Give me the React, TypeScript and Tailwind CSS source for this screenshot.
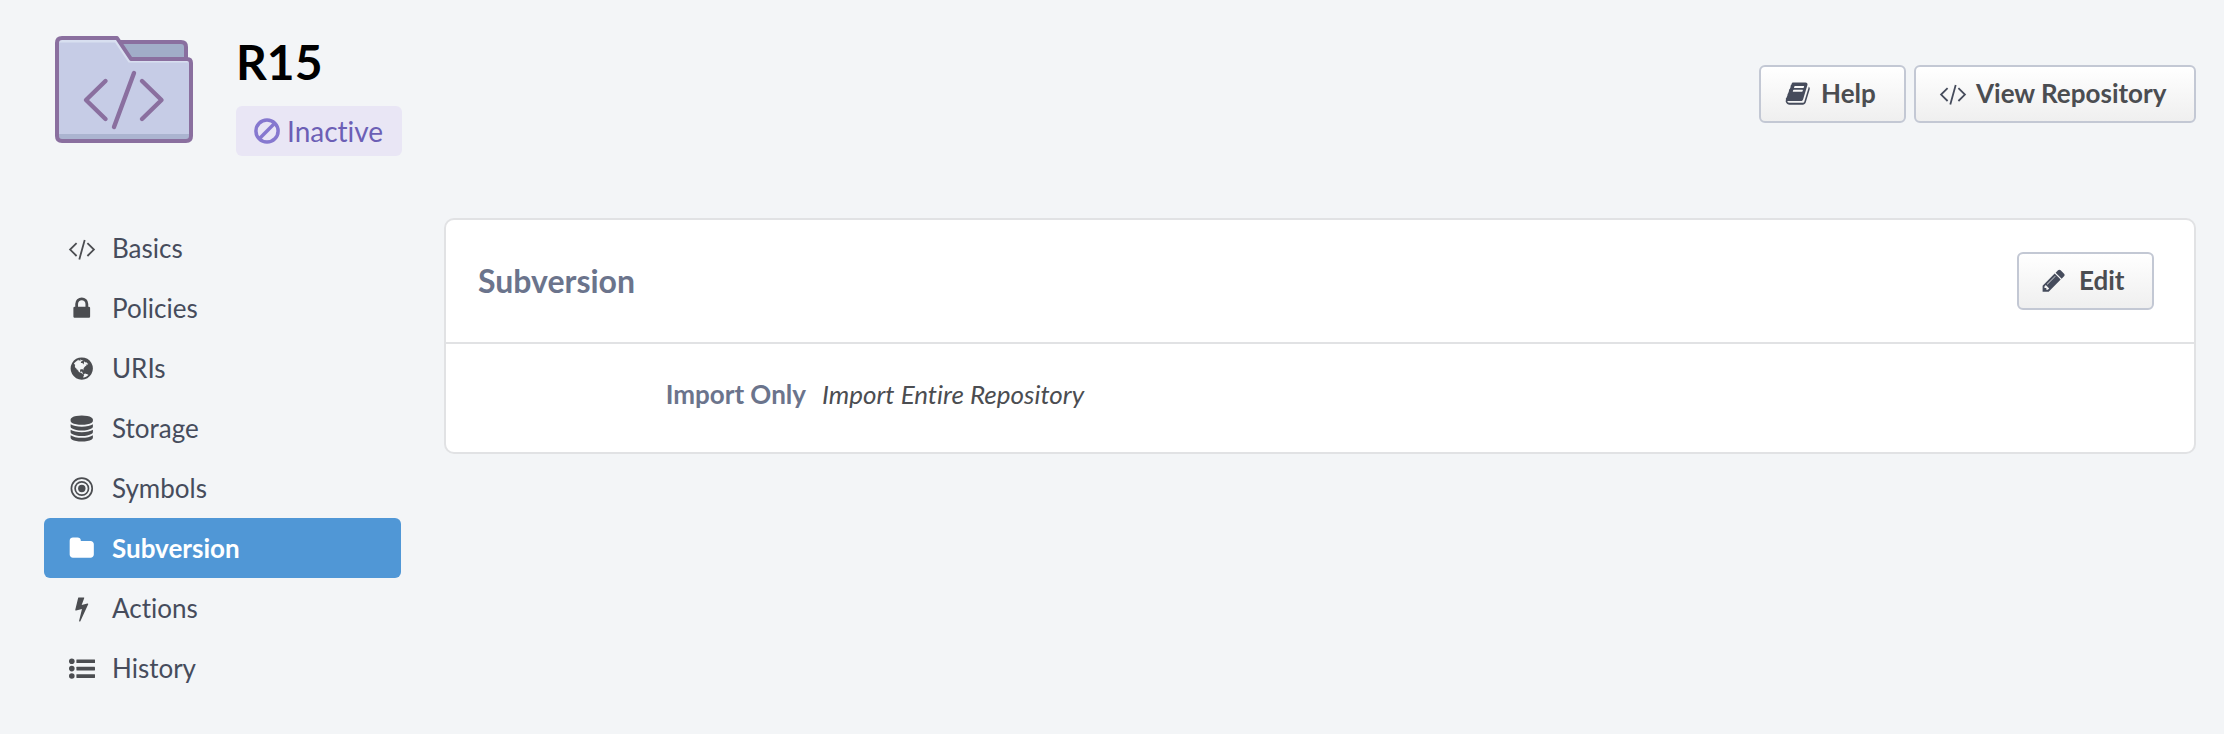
import React from 'react';

const paths = {
  lock: 'M640 768h512v-192q0-106-75-181t-181-75-181 75-75 181v192zm832 96v576q0 40-28 68t-68 28h-960q-40 0-68-28t-28-68v-576q0-40 28-68t68-28h32v-192q0-184 132-316t316-132 316 132 132 316v192h32q40 0 68 28t28 68z',
  globe:
    'M896 128q209 0 385.5 103t279.5 279.5 103 385.5-103 385.5-279.5 279.5-385.5 103-385.5-103-279.5-279.5-103-385.5 103-385.5 279.5-279.5 385.5-103zm274 521q-2 1-9.5 9.5t-13.5 9.5q2 0 4.5-5t5-11 3.5-7q6-7 22-15 14-6 52-12 34-8 51 11-2-2 9.5-13t14.5-12q3-2 15-4.5t15-7.5l2-22q-12 1-17.5-7t-6.5-21q0 2-6 8 0-7-4.5-8t-11.5 1-9 1q-10-3-15-7.5t-8-16.5-4-15q-2-5-9.5-10.5t-9.5-10.5q-1-2-2.5-5.5t-3-6.5-4-5.5-5.5-2.5-7 5-7.5 10-4.5 5q-3-2-6-1.5t-4.5 1-4.5 3-5 3.5q-3 2-8.5 3t-8.5 2q15-5-1-11-10-4-16-3 9-4 7.5-12t-8.5-14h5q-1-4-8.5-8.5t-17.5-8.5-13-6q-8-5-34-9.5t-33-.5q-5 6-4.5 10.5t4 14 3.5 12.5q1 6-5.5 13t-6.5 12q0 7 14 15.5t10 21.5q-3 8-16 16t-16 12q-5 8-1.5 18.5t10.5 16.5q2 2 1.5 4t-3.5 4.5-5.5 4-6.5 3.5l-3 2q-11 5-20.5-6t-13.5-26q-7-25-16-30-23-8-29 1-5-13-41-26-25-9-58-4 6-1 0-15-7-15-19-12 3-6 4-17.5t1-13.5q3-13 12-23 1-1 7-8.5t9.5-13.5.5-6q35 4 50-11 5-5 11.5-17t10.5-17q9-6 14-5.5t14.5 5.5 14.5 5q14 1 15.5-11t-7.5-20q12 1 3-17-4-7-8-9-12-4-27 5-8 4 2 8-1-1-9.5 10.5t-16.5 17.5-16-5q-1-1-5.5-13.5t-9.5-13.5q-8 0-16 15 3-8-11-15t-24-8q19-12-8-27-7-4-20.5-5t-19.5 4q-5 7-5.5 11.5t5 8 10.5 5.5 11.5 4 8.5 3q14 10 8 14-2 1-8.5 3.5t-11.5 4.5-6 4q-3 4 0 14t-2 14q-5-5-9-17.5t-7-16.5q7 9-25 6l-10-1q-4 0-16 2t-20.5 1-13.5-8q-4-8 0-20 1-4 4-2-4-3-11-9.5t-10-8.5q-46 15-94 41 6 1 12-1 5-2 13-6.5t10-5.5q34-14 42-7l5-5q14 16 20 25-7-4-30-1-20 6-22 12 7 12 5 18-4-3-11.5-10t-14.5-11-15-5q-16 0-22 1-146 80-235 222 7 7 12 8 4 1 5 9t2.5 11 11.5-3q9 8 3 19 1-1 44 27 19 17 21 21 3 11-10 18-1-2-9-9t-9-4q-3 5 .5 18.5t10.5 12.5q-7 0-9.5 16t-2.5 35.5-1 23.5l2 1q-3 12 5.5 34.5t21.5 19.5q-13 3 20 43 6 8 8 9 3 2 12 7.5t15 10 10 10.5q4 5 10 22.5t14 23.5q-2 6 9.5 20t10.5 23q-1 0-2.5 1t-2.5 1q3 7 15.5 14t15.5 13q1 3 2 10t3 11 8 2q2-20-24-62-15-25-17-29-3-5-5.5-15.5t-4.5-14.5q2 0 6 1.5t8.5 3.5 7.5 4 2 3q-3 7 2 17.5t12 18.5 17 19 12 13q6 6 14 19.5t0 13.5q9 0 20 10.5t17 19.5q5 8 8 26t5 24q2 7 8.5 13.5t12.5 9.5l16 8 13 7q5 2 18.5 10.5t21.5 11.5q10 4 16 4t14.5-2.5 13.5-3.5q15-2 29 15t21 21q36 19 55 11-2 1 .5 7.5t8 15.5 9 14.5 5.5 8.5q5 6 18 15t18 15q6-4 7-9-3 8 7 20t18 10q14-3 14-32-31 15-49-18 0-1-2.5-5.5t-4-8.5-2.5-8.5 0-7.5 5-3q9 0 10-3.5t-2-12.5-4-13q-1-8-11-20t-12-15q-5 9-16 8t-16-9q0 1-1.5 5.5t-1.5 6.5q-13 0-15-1 1-3 2.5-17.5t3.5-22.5q1-4 5.5-12t7.5-14.5 4-12.5-4.5-9.5-17.5-2.5q-19 1-26 20-1 3-3 10.5t-5 11.5-9 7q-7 3-24 2t-24-5q-13-8-22.5-29t-9.5-37q0-10 2.5-26.5t3-25-5.5-24.5q3-2 9-9.5t10-10.5q2-1 4.5-1.5t4.5 0 4-1.5 3-6q-1-1-4-3-3-3-4-3 7 3 28.5-1.5t27.5 1.5q15 11 22-2 0-1-2.5-9.5t-.5-13.5q5 27 29 9 3 3 15.5 5t17.5 5q3 2 7 5.5t5.5 4.5 5-.5 8.5-6.5q10 14 12 24 11 40 19 44 7 3 11 2t4.5-9.5 0-14-1.5-12.5l-1-8v-18l-1-8q-15-3-18.5-12t1.5-18.5 15-18.5q1-1 8-3.5t15.5-6.5 12.5-8q21-19 15-35 7 0 11-9-1 0-5-3t-7.5-5-4.5-2q9-5 2-16 5-3 7.5-11t7.5-10q9 12 21 2 7-8 1-16 5-7 20.5-10.5t18.5-9.5q7 2 8-2t1-12 3-12q4-5 15-9t13-5l17-11q3-4 0-4 18 2 31-11 10-11-6-20 3-6-3-9.5t-15-5.5q3-1 11.5-.5t10.5-1.5q15-10-7-16-17-5-43 12zm-163 877q206-36 351-189-3-3-12.5-4.5t-12.5-3.5q-18-7-24-8 1-7-2.5-13t-8-9-12.5-8-11-7q-2-2-7-6t-7-5.5-7.5-4.5-8.5-2-10 1l-3 1q-3 1-5.5 2.5t-5.5 3-4 3 0 2.5q-21-17-36-22-5-1-11-5.5t-10.5-7-10-1.5-11.5 7q-5 5-6 15t-2 13q-7-5 0-17.5t2-18.5q-3-6-10.5-4.5t-12 4.500-11.500 8.500-9 6.500-8.500 5.500-8.500 7.500q-3 4-6 12t-5 11q-2-4-11.500-6.500t-9.500-5.500q2 10 4 35t5 38q7 31-12 48-27 25-29 40-4 22 12 26 0 7-8 20.500t-7 21.500q0 6 2 16z',
  database:
    'M896 768q237 0 443-43t325-127v170q0 69-103 128t-280 93.5-385 34.5-385-34.5-280-93.5-103-128v-170q119 84 325 127t443 43zm0 768q237 0 443-43t325-127v170q0 69-103 128t-280 93.5-385 34.5-385-34.5-280-93.5-103-128v-170q119 84 325 127t443 43zm0-384q237 0 443-43t325-127v170q0 69-103 128t-280 93.5-385 34.5-385-34.5-280-93.5-103-128v-170q119 84 325 127t443 43zm0-1152q208 0 385 34.5t280 93.5 103 128v128q0 69-103 128t-280 93.5-385 34.5-385-34.5-280-93.5-103-128v-128q0-69 103-128t280-93.5 385-34.5z',
  folder:
    'M1728 608v704q0 92-66 158t-158 66h-1216q-92 0-158-66t-66-158v-960q0-92 66-158t158-66h320q92 0 158 66t66 158v32h672q92 0 158 66t66 158z',
  bolt: 'M1333 566q18 20 7 44l-540 1157q-13 25-42 25-4 0-14-2-17-5-25.5-19t-4.5-30l197-808-406 101q-4 1-12 1-18 0-31-11-18-15-13-39l201-825q4-14 16-23t28-9h328q19 0 32 12.5t13 29.5q0 8-5 18l-171 463 396-98q8-2 12-2 19 0 34 15z',
  pencil:
    'M491 1536l91-91-235-235-91 91v107h128v128h107zm523-928q0-22-22-22-10 0-17 7l-542 542q-7 7-7 17 0 22 22 22 10 0 17-7l542-542q7-7 7-17zm-54-192l416 416-832 832h-416v-416zm683 96q0 53-37 90l-166 166-416-416 166-165q36-38 90-38 53 0 91 38l235 234q37 39 37 91z',
  book: 'M1703 478q40 57 18 129l-275 906q-19 64-76.5 107.5t-122.5 43.5h-923q-77 0-148.5-53.5t-99.5-131.5q-24-67-2-127 0-4 3-27t4-37q1-8-3-21.5t-3-19.5q2-11 8-21t16.5-23.5 16.5-23.5q23-38 45-91.5t30-91.5q3-10 .5-30t-.5-28q3-11 17-28t17-23q21-36 42-92t25-90q1-9-2.5-32t.5-28q4-13 22-30.5t22-22.5q19-26 42.5-84.5t27.5-96.5q1-8-3-25.5t-2-26.5q2-8 9-18t18-23 17-21q8-12 16.5-30.5t15-35 16-36 19.5-32 26.5-23.5 36-11.5 47.5 5.5l-1 3q38-9 51-9h761q74 0 114 56t18 130l-274 906q-36 119-71.5 153.5t-128.5 34.5h-869q-27 0-38 15-11 16-1 43 24 70 144 70h923q29 0 56-15.5t35-41.5l300-987q7-22 5-57 38 15 59 43zm-1064 2q-4 13 2 22.5t20 9.5h608q13 0 25.5-9.5t16.5-22.5l21-64q4-13-2-22.5t-20-9.5h-608q-13 0-25.5 9.5t-16.5 22.5zm-83 256q-4 13 2 22.5t20 9.5h608q13 0 25.5-9.5t16.5-22.5l21-64q4-13-2-22.5t-20-9.5h-608q-13 0-25.5 9.5t-16.5 22.5z',
};

function Glyph({ name }: { name: keyof typeof paths }) {
  return (
    <svg viewBox="17 -36 1792 1792" className="size-[26px] shrink-0 overflow-visible" fill="currentColor">
      <path d={paths[name]} />
    </svg>
  );
}

function CodeIcon() {
  return (
    <svg viewBox="0 0 26 26" className="size-[26px] shrink-0 overflow-visible" fill="none" stroke="currentColor" strokeWidth="1.8">
      <path d="M7.6 8.2 1.1 14.6l6.5 6.4M18.4 8.200l6.500 6.400-6.500 6.400M15.700 5 10.300 24.400" />
    </svg>
  );
}

function TargetIcon() {
  return (
    <svg viewBox="0.2 -0.5 26 26" className="size-[26px] shrink-0" fill="none" stroke="currentColor" strokeWidth="1.7">
      <circle cx="13" cy="13" r="10.4" />
      <circle cx="13" cy="13" r="6.7" />
      <circle cx="13" cy="13" r="3.7" fill="currentColor" stroke="none" />
    </svg>
  );
}

function ListIcon() {
  return (
    <svg viewBox="0 -0.6 26 26" className="size-[26px] shrink-0" fill="currentColor">
      {[5.6, 13, 20.4].map((y) => (
        <g key={y}>
          <circle cx="2.8" cy={y} r="2.8" />
          <rect x="7.4" y={y - 1.8} width="18.6" height="3.7" rx="0.4" />
        </g>
      ))}
    </svg>
  );
}

function BanIcon() {
  return (
    <svg viewBox="0 0 26 26" className="size-[26px] shrink-0" fill="none" stroke="currentColor" strokeWidth="3.5">
      <circle cx="13" cy="13" r="11.1" />
      <path d="M5.3 20.7 20.7 5.3" />
    </svg>
  );
}

function RepositoryIcon() {
  return (
    <svg viewBox="0 0 140 110" className="h-[110px] w-[140px] shrink-0" strokeLinejoin="round" strokeLinecap="round">
      <path d="M62 7h65q5 0 5 5v26H62z" fill="#a1adc8" stroke="#8a6f9f" strokeWidth="4" />
      <path d="M3 8q0-5 5-5h55l14 21h56q4 0 4 4v73q0 5-5 5H8q-5 0-5-5z" fill="#c6cce6" />
      <path d="M4 7.500 H61L74.500 27.500H137V24H77L63 3H8Q3 3 3 7.500z" fill="#d8dff0" />
      <path d="M3 99h134v3q0 4-5 4H8q-5 0-5-4z" fill="#abb4d0" />
      <path d="M3 8q0-5 5-5h55l14 21h56q4 0 4 4v73q0 5-5 5H8q-5 0-5-5z" fill="none" stroke="#8a6f9f" strokeWidth="4" />
      <path d="M51.500 46 32 65l19.500 19M88 46l19.500 19L88 84M80 38 60 92" fill="none" stroke="#8a6f9f" strokeWidth="4.400" />
    </svg>
  );
}

function Button({ icon, label, className }: { icon: React.ReactNode; label: string; className: string }) {
  return (
    <button
      className={`flex h-[58px] items-center rounded-md border-2 border-[#c3c8d4] bg-linear-to-b from-white to-[#efefef] pb-[2px] font-bold text-[#4b4d51] ${className}`}
    >
      <span className="text-[#464c5c]">{icon}</span>
      <span>{label}</span>
    </button>
  );
}

const items: { label: string; icon: React.ReactNode; active?: boolean }[] = [
  { label: 'Basics', icon: <CodeIcon /> },
  { label: 'Policies', icon: <Glyph name="lock" /> },
  { label: 'URIs', icon: <Glyph name="globe" /> },
  { label: 'Storage', icon: <Glyph name="database" /> },
  { label: 'Symbols', icon: <TargetIcon /> },
  { label: 'Subversion', icon: <Glyph name="folder" />, active: true },
  { label: 'Actions', icon: <Glyph name="bolt" /> },
  { label: 'History', icon: <ListIcon /> },
];

export default function App() {
  return (
    <div className="h-[734px] w-[2224px] bg-[#f3f5f7] pr-7 pl-11 font-['Lato',sans-serif] text-[26px] leading-[30px] text-[#4b4d51] [font-variant-ligatures:none]">
      <header className="flex h-[218px] items-start">
        <div className="pt-[35px] pl-[10px]">
          <RepositoryIcon />
        </div>
        <div className="flex flex-col items-start pt-8 pl-[42px]">
          <h1 className="h-[74px] text-[48px] leading-[60px] font-bold text-black">R15</h1>
          <div className="flex h-[50px] w-[166px] items-center gap-[7px] rounded-md bg-[#e9e6f5] pl-[18px] text-[28px] text-[#6c5fb5]">
            <span className="text-[#8678cf]">
              <BanIcon />
            </span>
            <span>Inactive</span>
          </div>
        </div>
        <div className="ml-auto flex gap-2 pt-[65px]">
          <Button icon={<Glyph name="book" />} label="Help" className="w-[147px] gap-[10px] pl-6" />
          <Button icon={<CodeIcon />} label="View Repository" className="w-[282px] gap-[10px] pl-6" />
        </div>
      </header>
      <div className="flex items-start gap-[43px]">
        <nav className="w-[357px]">
          {items.map((item) => (
            <a
              key={item.label}
              className={
                item.active
                  ? 'flex h-[60px] items-center gap-[17px] rounded-md bg-[#5097d6] pl-[25px] font-bold text-white'
                  : 'flex h-[60px] items-center gap-[17px] pl-[25px] text-[#4b4d51]'
              }
            >
              {item.icon}
              <span className={item.active ? 'text-white' : 'text-[#464c5c]'}>{item.label}</span>
            </a>
          ))}
        </nav>
        <main className="h-[236px] flex-1 rounded-[10px] border-2 border-[#e1e2e4] bg-white">
          <div className="flex h-[124px] items-center justify-between border-b-2 border-[#e1e2e4] pr-10 pl-8">
            <h2 className="text-[32px] leading-[40px] font-bold text-[#6b748c]">Subversion</h2>
            <Button icon={<Glyph name="pencil" />} label="Edit" className="w-[137px] gap-[12px] pl-[22px]" />
          </div>
          <dl className="flex gap-4 pt-[35px]">
            <dt className="w-[360px] text-right font-bold text-[#6b748c]">Import Only</dt>
            <dd className="italic">Import Entire Repository</dd>
          </dl>
        </main>
      </div>
    </div>
  );
}
